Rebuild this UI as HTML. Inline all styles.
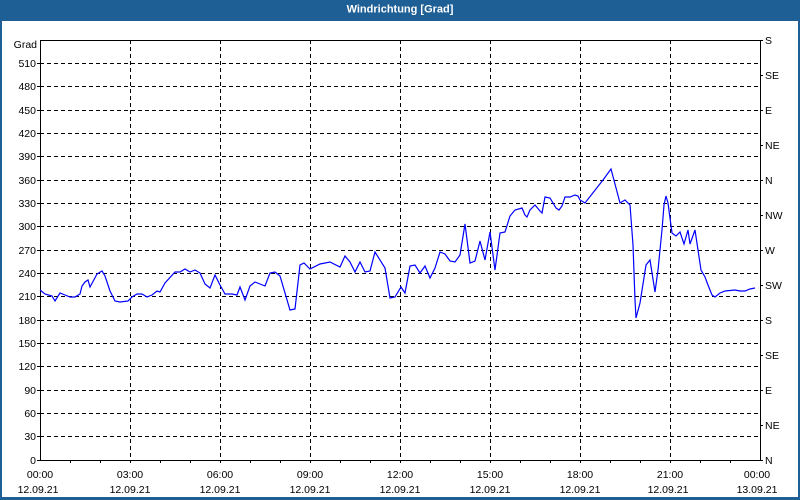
<!DOCTYPE html>
<html><head><meta charset="utf-8"><style>
html,body{margin:0;padding:0;background:#fff}
svg{display:block}
text{font-family:"Liberation Sans",sans-serif;font-size:10.5px;fill:#000}
</style></head><body>
<svg width="800" height="500" viewBox="0 0 800 500" xmlns="http://www.w3.org/2000/svg">
<rect x="0" y="0" width="800" height="500" fill="#fff"/>
<rect x="0" y="0" width="800" height="21" fill="#1e5f96"/>
<rect x="0" y="0" width="2" height="500" fill="#1e5f96"/>
<rect x="798" y="0" width="2" height="500" fill="#1e5f96"/>
<rect x="0" y="497" width="800" height="3" fill="#1e5f96"/>
<text x="400" y="12.5" text-anchor="middle" style="fill:#fff;font-weight:bold;font-size:11px">Windrichtung [Grad]</text>
<g stroke="#000" stroke-dasharray="4,3" stroke-width="1">
<path d="M40 63.5H758M40 86.5H758M40 110.5H758M40 133.5H758M40 156.5H758M40 180.5H758M40 203.5H758M40 226.5H758M40 250.5H758M40 273.5H758M40 296.5H758M40 320.5H758M40 343.5H758M40 366.5H758M40 390.5H758M40 413.5H758M40 436.5H758"/>
<path d="M130.5 40V460M220.5 40V460M310.5 40V460M400.5 40V460M490.5 40V460M580.5 40V460M670.5 40V460"/>
</g>
<g stroke="#000" stroke-width="1" fill="none">
<path d="M40.5 40V460.5H760.5V40M40 40.5H760.5"/>
<path d="M70.5 460v3M100.5 460v3M130.5 460v3M160.5 460v3M190.5 460v3M220.5 460v3M250.5 460v3M280.5 460v3M310.5 460v3M340.5 460v3M370.5 460v3M400.5 460v3M430.5 460v3M460.5 460v3M490.5 460v3M520.5 460v3M550.5 460v3M580.5 460v3M610.5 460v3M640.5 460v3M670.5 460v3M700.5 460v3M730.5 460v3"/>
<path d="M37 63.5h3M37 86.5h3M37 110.5h3M37 133.5h3M37 156.5h3M37 180.5h3M37 203.5h3M37 226.5h3M37 250.5h3M37 273.5h3M37 296.5h3M37 320.5h3M37 343.5h3M37 366.5h3M37 390.5h3M37 413.5h3M37 436.5h3M37 460.5h3"/>
<path d="M760 40.5h3M760 75.5h3M760 110.5h3M760 145.5h3M760 180.5h3M760 215.5h3M760 250.5h3M760 285.5h3M760 320.5h3M760 355.5h3M760 390.5h3M760 425.5h3M760 460.5h3"/>
</g>
<g text-anchor="end">
<text x="37" y="48">Grad</text>
<text x="36" y="67">510</text><text x="36" y="90">480</text><text x="36" y="114">450</text><text x="36" y="137">420</text><text x="36" y="160">390</text><text x="36" y="184">360</text><text x="36" y="207">330</text><text x="36" y="230">300</text><text x="36" y="254">270</text><text x="36" y="277">240</text><text x="36" y="300">210</text><text x="36" y="324">180</text><text x="36" y="347">150</text><text x="36" y="370">120</text><text x="36" y="394">90</text><text x="36" y="417">60</text><text x="36" y="440">30</text><text x="36" y="464">0</text>
</g>
<g>
<text x="765" y="44">S</text><text x="765" y="79">SE</text><text x="765" y="114">E</text><text x="765" y="149">NE</text><text x="765" y="184">N</text><text x="765" y="219">NW</text><text x="765" y="254">W</text><text x="765" y="289">SW</text><text x="765" y="324">S</text><text x="765" y="359">SE</text><text x="765" y="394">E</text><text x="765" y="429">NE</text><text x="765" y="464">N</text>
</g>
<g text-anchor="middle">
<text x="40" y="478">00:00</text><text x="130" y="478">03:00</text><text x="220" y="478">06:00</text><text x="310" y="478">09:00</text><text x="400" y="478">12:00</text><text x="490" y="478">15:00</text><text x="580" y="478">18:00</text><text x="670" y="478">21:00</text><text x="757" y="478">00:00</text>
<text x="38" y="493">12.09.21</text><text x="130" y="493">12.09.21</text><text x="220" y="493">12.09.21</text><text x="310" y="493">12.09.21</text><text x="400" y="493">12.09.21</text><text x="490" y="493">12.09.21</text><text x="580" y="493">12.09.21</text><text x="668" y="493">12.09.21</text><text x="757" y="493">13.09.21</text>
</g>
<polyline fill="none" stroke="#0000ff" stroke-width="1.2" points="40,290 45,294 52,296 55,301 60,293 65,295 70,297 75,297 80,294 82,286 85,282 88,280 90,287 97,274 102,271 105,276 110,291 115,301 120,302 128,301 132,297 137,294 142,294 147,297 152,295 157,291 160,292 165,283 175,272 180,272 185,269 190,272 195,270 200,273 205,284 210,288 215,275 220,285 225,294 232,294 237,295 240,287 245,300 250,286 255,282 260,284 265,286 270,273 275,272 280,276 290,310 295,309 300,265 304,263 310,269 320,264 330,262 340,267 345,256 350,262 355,272 360,262 365,272 370,271 375,252 385,268 390,298 395,297 401,287 405,293 410,266 415,265 420,273 425,266 430,278 435,268 440,252 445,254 450,261 455,262 460,255 465,224 470,263 475,261 480,241 485,260 490,232 495,270 500,233 505,232 510,216 515,210 522,208 525,215 527,217 530,210 535,205 540,211 542,213 545,197 550,198 553,203 556,208 559,210 562,206 565,197 570,197 575,195 578,196 580,200 585,203 603,180 611,169 620,203 625,200 630,205 633,245 635,300 636,318 640,303 646,265 650,260 655,292 658,270 662,230 664,205 666,196 668,203 672,233 676,236 680,232 684,244 688,230 690,244 695,230 698,250 701,270 705,277 708,285 712,295 715,297 720,293 725,291 735,290 740,291 745,291 750,289 755,288"/>
</svg>
</body></html>
